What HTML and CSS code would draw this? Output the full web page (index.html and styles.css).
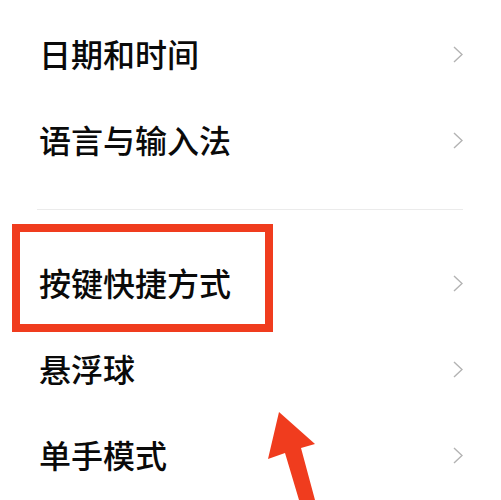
FILE: index.html
```html
<!DOCTYPE html>
<html lang="zh-CN">
<head>
  <meta charset="UTF-8">
  <meta name="viewport" content="width=device-width, initial-scale=1.0">
  <title>更多设置</title>
  <link rel="stylesheet" href="styles.css">
</head>
<body>
  <div id="settings">
    <div class="group">
      <div class="row">
        <span class="label">日期和时间</span>
        <svg class="chevron" viewBox="0 0 10 17"><polyline points="1,1 9,8.5 1,16" /></svg>
      </div>
      <div class="row">
        <span class="label">语言与输入法</span>
        <svg class="chevron" viewBox="0 0 10 17"><polyline points="1,1 9,8.5 1,16" /></svg>
      </div>
    </div>

    <div class="divider"></div>

    <div class="group">
      <div class="row">
        <span class="label">按键快捷方式</span>
        <svg class="chevron" viewBox="0 0 10 17"><polyline points="1,1 9,8.5 1,16" /></svg>
      </div>
      <div class="row">
        <span class="label">悬浮球</span>
        <svg class="chevron" viewBox="0 0 10 17"><polyline points="1,1 9,8.5 1,16" /></svg>
      </div>
      <div class="row">
        <span class="label">单手模式</span>
        <svg class="chevron" viewBox="0 0 10 17"><polyline points="1,1 9,8.5 1,16" /></svg>
      </div>
    </div>

    <!-- marca roja encima de "按键快捷方式" -->
    <div id="highlight"></div>
    <svg id="pointer" viewBox="0 0 501 500">
      <polygon points="279,412 268,459 285,453 299,500 315,500 301,448 315,444" />
    </svg>
  </div>
</body>
</html>
```

FILE: styles.css
```css
body {
  margin: 0;
  background: #fff;
  font-family: "Noto Sans CJK SC", "Noto Sans", sans-serif;
  color: #0a0a0a;
}

#settings {
  position: relative;
  width: 501px;
  height: 500px;
  overflow: hidden;
  padding-top: 10px;
  box-sizing: border-box;
}

.row {
  height: 86px;
  display: flex;
  justify-content: space-between;
  align-items: center;
  padding: 0 38px 0 39px;
}

.row .chevron {
  margin-top: 2px;
}

.label {
  font-size: 32px;
  font-weight: 500;
  line-height: 1;
}

.chevron {
  width: 10px;
  height: 17px;
}

.chevron polyline {
  fill: none;
  stroke: #b3b3b3;
  stroke-width: 1.4;
}

.divider {
  height: 1px;
  margin: 27px 38px 29px 37px;
  background: #ebebeb;
}

#highlight {
  position: absolute;
  left: 12px;
  top: 224px;
  width: 261px;
  height: 108px;
  border: 8px solid #f03c1e;
  box-sizing: border-box;
}

#pointer {
  position: absolute;
  left: 0;
  top: 0;
  width: 501px;
  height: 500px;
}

#pointer polygon {
  fill: #f03c1e;
}
```
